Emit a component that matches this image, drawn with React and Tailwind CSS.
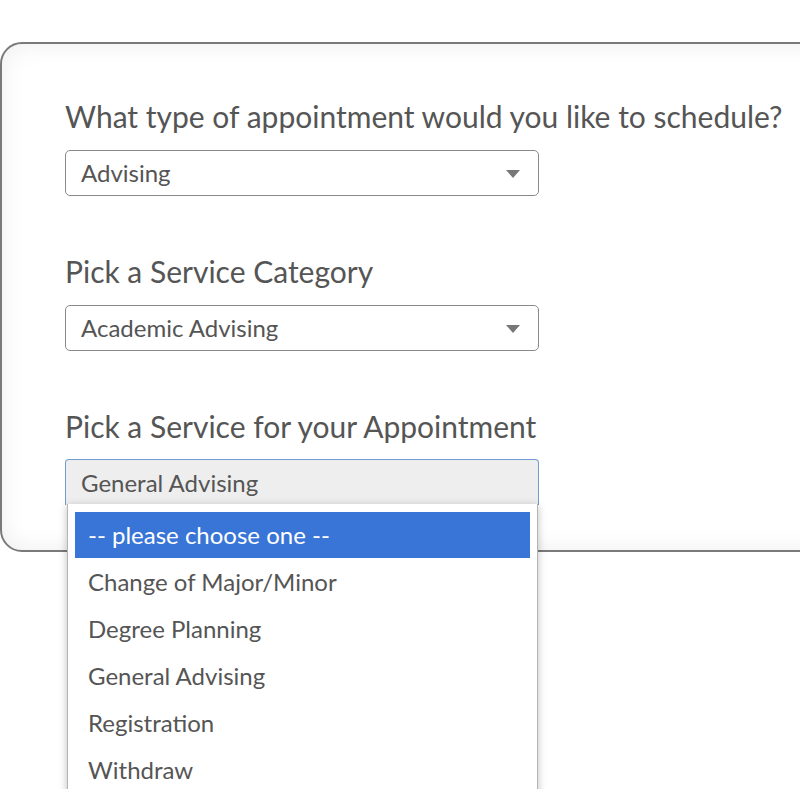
const options = [
  "Change of Major/Minor",
  "Degree Planning",
  "General Advising",
  "Registration",
  "Withdraw",
];

const Arrow = () => (
  <svg width="14" height="8" viewBox="0 0 14 8" className="absolute right-[18px] top-[19px]">
    <path d="M0 0 L14 0 L7 8 Z" fill="#777" />
  </svg>
);

const Select = ({ value }) => (
  <div className="relative w-[474px] h-[46px] rounded-[5px] border border-[#8a8a8a] bg-white flex items-center pl-[15px] text-[24px] text-[#555]">
    {value}
    <Arrow />
  </div>
);

const Label = ({ children }) => (
  <div className="text-[30px] leading-[36px] text-[#555]">{children}</div>
);

export default function App() {
  return (
    <div className="relative h-[789px] w-[800px] overflow-hidden bg-white" style={{ fontFamily: "Lato, 'Open Sans', sans-serif" }}>
      <div className="mt-[42px] w-[840px] h-[510px] border-2 border-[#7a7a7a] rounded-l-[22px] bg-white shadow-[inset_0_0_26px_rgba(0,0,0,0.07)] pt-[54px] pl-[63px]">
        <Label>What type of appointment would you like to schedule?</Label>
        <div className="mt-[16px]">
          <Select value="Advising" />
        </div>

        <div className="mt-[57px]">
          <Label>Pick a Service Category</Label>
        </div>
        <div className="mt-[16px]">
          <Select value="Academic Advising" />
        </div>

        <div className="mt-[57px]">
          <Label>Pick a Service for your Appointment</Label>
        </div>
        <div className="relative mt-[15px] w-[474px]">
          <div className="h-[46px] rounded-t-[4px] border border-[#6f9bd1] border-b-0 bg-[#eeeeee] flex items-center pl-[15px] text-[24px] text-[#555]">
            General Advising
          </div>
          <div className="absolute left-[2px] top-[45px] w-[471px] h-[300px] bg-white border-l border-r border-[#b5b5b5] shadow-[0_2px_8px_rgba(0,0,0,0.25)] px-[7px] pt-[8px] z-10">
            <div className="h-[46px] bg-[#3875d7] flex items-center pl-[13px] text-[24px] text-white">
              -- please choose one --
            </div>
            {options.map((o) => (
              <div key={o} className="h-[47px] flex items-center pl-[13px] text-[24px] text-[#555]">
                {o}
              </div>
            ))}
          </div>
        </div>
      </div>
    </div>
  );
}
